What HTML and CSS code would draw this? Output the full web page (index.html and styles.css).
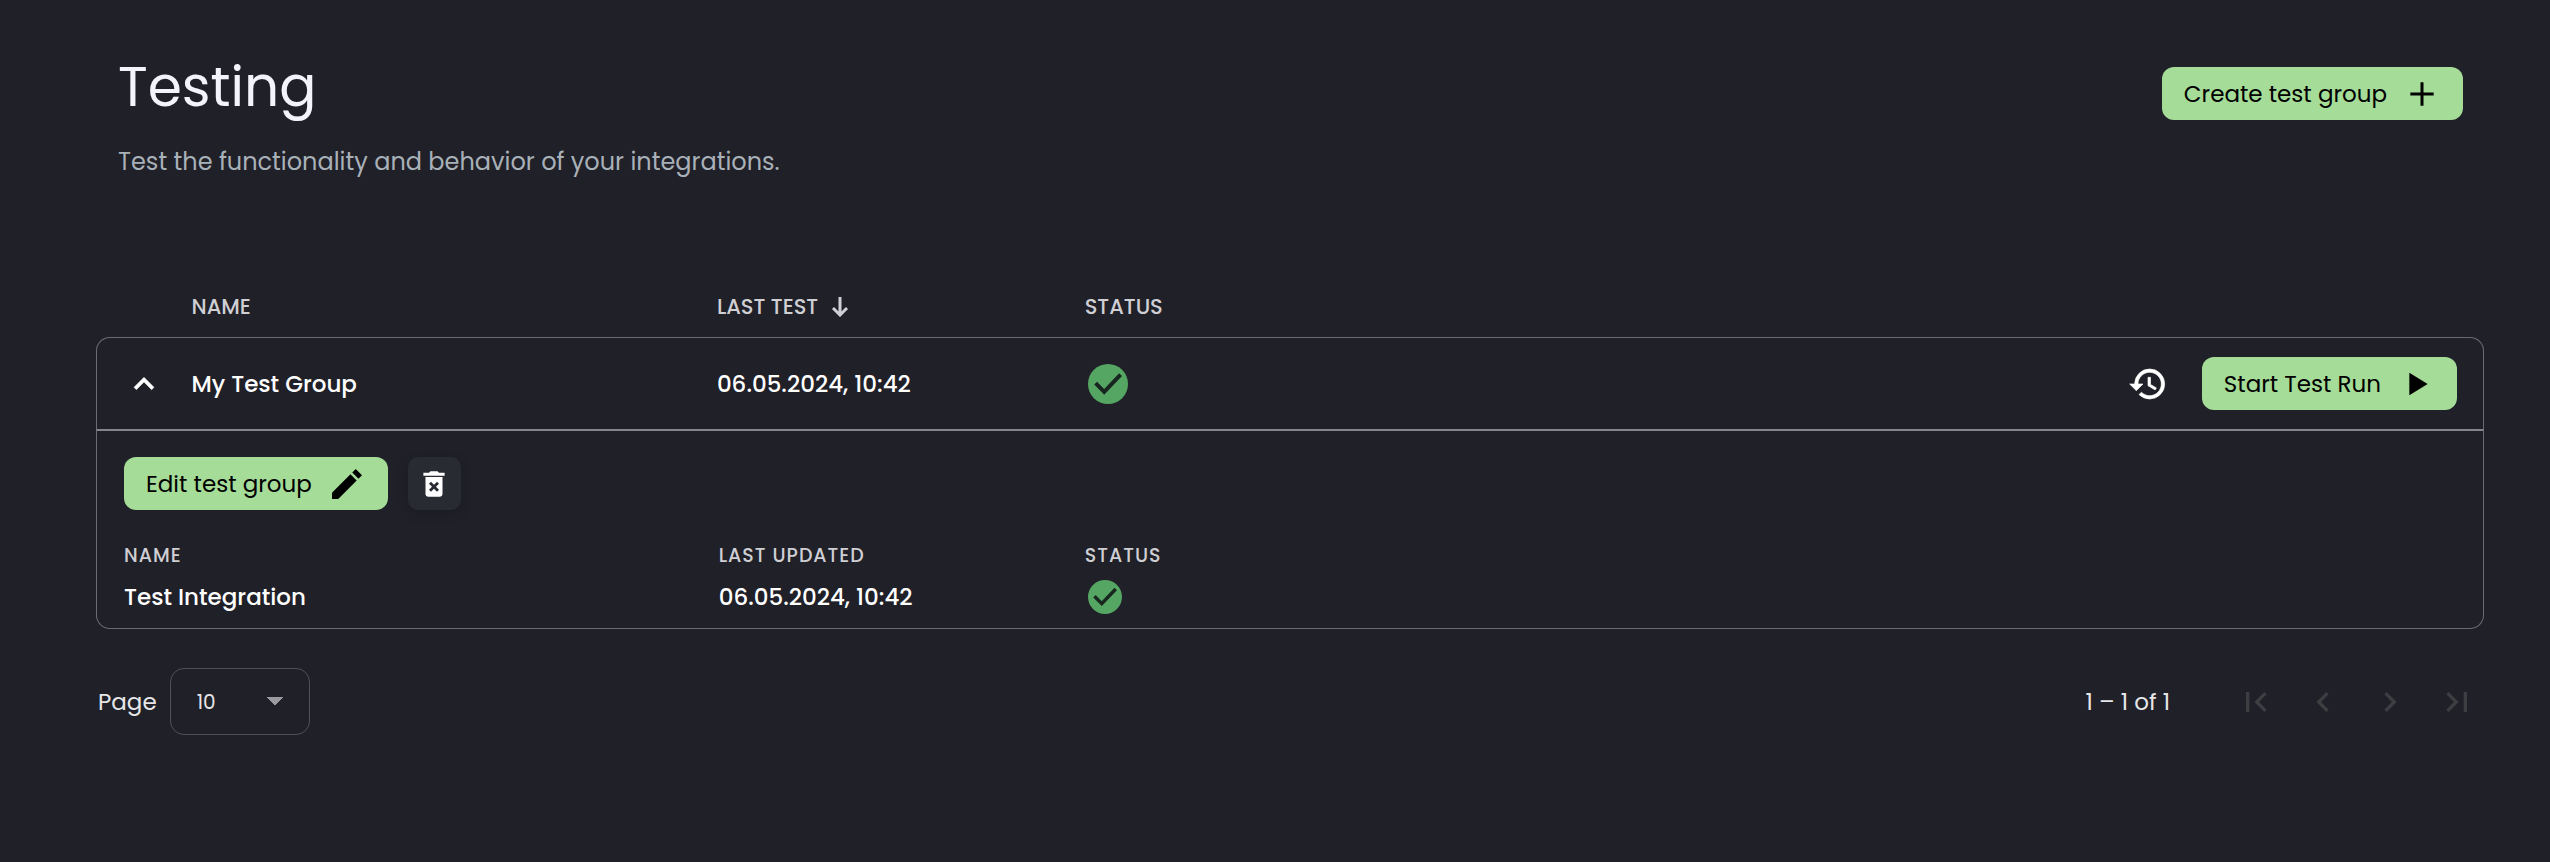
FILE: index.html
```html
<!DOCTYPE html>
<html lang="en">
<head>
<meta charset="utf-8">
<meta name="viewport" content="width=device-width, initial-scale=1">
<title>Testing</title>
<link rel="stylesheet" href="styles.css">
</head>
<body>
<main class="page">
  <header class="page-header">
    <div class="page-heading">
      <h1 class="page-title">Testing</h1>
      <p class="page-description">Test the functionality and behavior of your integrations.</p>
    </div>
    <button class="button" type="button">Create test group
      <svg class="icon" viewBox="0 0 24 24" aria-hidden="true"><path d="M19 12.900h-6.100V19h-1.800v-6.100H5v-1.800h6.100V5h1.800v6.100H19z"/></svg>
    </button>
  </header>

  <table class="groups">
    <colgroup><col class="col-toggle"><col class="col-name"><col class="col-date"><col class="col-status"><col></colgroup>
    <thead>
      <tr>
        <td></td>
        <th scope="col">NAME</th>
        <th scope="col" aria-sort="descending"><button class="sort" type="button">LAST TEST
          <svg class="icon-sort" viewBox="0 0 18 20" aria-hidden="true"><path d="M9 0v18M2 11l7 7 7-7"/></svg></button></th>
        <th scope="col">STATUS</th>
        <td></td>
      </tr>
    </thead>
    <tbody>
      <tr class="group-row">
        <td><button class="toggle" type="button" aria-label="Collapse group" aria-expanded="true">
          <svg class="icon" viewBox="0 0 24 24" aria-hidden="true"><path d="M12 8l-6 6 1.410 1.410L12 10.830l4.590 4.580L18 14z" stroke="currentColor" stroke-width=".3"/></svg></button></td>
        <td>My Test Group</td>
        <td>06.05.2024, 10:42</td>
        <td><svg class="status status-large" viewBox="2 2 20 20" role="img" aria-label="Passed"><circle cx="12" cy="12" r="10"/><path d="M5.800 11.600l4.300 4.300L18.300 7.300"/></svg></td>
        <td><div class="row-actions">
          <button type="button" aria-label="History">
            <svg class="icon" viewBox="0 0 24 24" aria-hidden="true"><path stroke="currentColor" stroke-width=".4" d="M13 3a9 9 0 0 0-9 9H1l3.890 3.890.070.140L9 12H6c0-3.870 3.130-7 7-7s7 3.130 7 7-3.130 7-7 7c-1.930 0-3.680-.790-4.940-2.060l-1.420 1.420A8.950 8.950 0 0 0 13 21a9 9 0 0 0 0-18zm-1 5v5l4.280 2.540.720-1.210-3.500-2.080V8z"/></svg></button>
          <button class="button" type="button">Start Test Run
            <svg class="icon" viewBox="0 0 24 24" aria-hidden="true"><path d="M8 5.200v13.600L19 12z"/></svg></button>
        </div></td>
      </tr>
      <tr>
        <td class="group-detail" colspan="5">
          <div class="detail-actions">
            <button class="button" type="button">Edit test group
              <svg class="icon" viewBox="0 0 24 24" aria-hidden="true"><path d="M3 17.250V21h3.750L17.810 9.940l-3.750-3.750zM21 6.750L17.250 3l-2.120 2.120 3.750 3.750z"/></svg></button>
            <button class="delete" type="button" aria-label="Delete test group">
              <svg class="icon-small" viewBox="0 0 24 24" aria-hidden="true"><path fill-rule="evenodd" d="M6 19c0 1.100.9 2 2 2h8c1.100 0 2-.9 2-2V7H6zm2.460-7.120l1.410-1.410L12 12.590l2.120-2.120 1.410 1.410L13.410 14l2.120 2.120-1.410 1.410L12 15.410l-2.120 2.120-1.410-1.410L10.590 14z"/><path d="M15.500 4l-1-1h-5l-1 1H4.500v2.200h15V4z"/></svg></button>
          </div>
          <table class="integrations">
            <colgroup><col class="col-integration"><col class="col-updated"><col></colgroup>
            <thead><tr><th scope="col">NAME</th><th scope="col">LAST UPDATED</th><th scope="col">STATUS</th></tr></thead>
            <tbody><tr>
              <td>Test Integration</td>
              <td>06.05.2024, 10:42</td>
              <td><svg class="status" viewBox="2 2 20 20" role="img" aria-label="Passed"><circle cx="12" cy="12" r="10"/><path d="M5.800 11.600l4.300 4.300L18.300 7.300"/></svg></td>
            </tr></tbody>
          </table>
        </td>
      </tr>
    </tbody>
  </table>

  <footer class="paginator">
    <div class="page-size">
      <label for="page-size">Page</label>
      <select id="page-size" class="page-select"><option>10</option><option>25</option><option>50</option></select>
    </div>
    <nav class="page-nav" aria-label="Pagination">
      <span class="range">1 – 1 of 1</span>
      <button class="nav-button" type="button" disabled aria-label="First page"><svg class="icon" viewBox="0 0 24 24" aria-hidden="true"><path d="M18.410 16.590L13.820 12l4.590-4.590L17 6l-6 6 6 6zM6 6h2v12H6z"/></svg></button>
      <button class="nav-button" type="button" disabled aria-label="Previous page"><svg class="icon" viewBox="0 0 24 24" aria-hidden="true"><path d="M15.410 7.410L14 6l-6 6 6 6 1.410-1.410L10.830 12z"/></svg></button>
      <button class="nav-button" type="button" disabled aria-label="Next page"><svg class="icon" viewBox="0 0 24 24" aria-hidden="true"><path d="M10 6L8.590 7.410 13.170 12l-4.580 4.590L10 18l6-6z"/></svg></button>
      <button class="nav-button" type="button" disabled aria-label="Last page"><svg class="icon" viewBox="0 0 24 24" aria-hidden="true"><path d="M5.590 7.410L10.180 12l-4.590 4.590L7 18l6-6-6-6zM16 6h2v12h-2z"/></svg></button>
    </nav>
  </footer>
</main>
</body>
</html>
```
FILE: styles.css
```css
* { box-sizing: border-box; }

body {
  margin: 0;
  background: #202028;
  color: #fff;
  font-family: Poppins, Inter, sans-serif;
  font-size: 23px;
  line-height: 36px;
}

button, select { font: inherit; color: inherit; }
button { border: 0; background: none; padding: 0; cursor: pointer; }
svg { display: block; fill: currentColor; flex: none; }

.page { padding: 53px 66px 64px 96px; }

.page-header {
  display: flex;
  justify-content: space-between;
  align-items: flex-start;
  padding: 0 21px 0 22px;
  margin-bottom: 97px;
}
.page-title { margin: 0 0 23px; font-size: 55px; font-weight: 400; line-height: 68px; color: #f3f3fa; }
.page-description { margin: 0; font-size: 24px; color: #a9b1b8; }
.page-header .button { margin-top: 14px; }

.button {
  display: inline-flex;
  align-items: center;
  gap: 15px;
  height: 53px;
  padding: 0 21px 0 22px;
  border-radius: 12px;
  background: #a4dc98;
  color: #000;
  font-weight: 400;
  white-space: nowrap;
}
.icon { width: 40px; height: 40px; }
.icon-small { width: 34px; height: 34px; }

table { width: 100%; border-collapse: separate; border-spacing: 0; table-layout: fixed; }
th, td { padding: 0; text-align: left; font-weight: 500; }

.col-toggle { width: 4%; }
.col-name { width: 22%; }
.col-date { width: 15.4%; }
.col-status { width: 25%; }

.groups > thead th { height: 60px; font-size: 21px; color: #cfcfd4; }
.sort { display: flex; align-items: center; gap: 13px; }
.icon-sort { width: 18px; height: 20px; fill: none; stroke: currentColor; stroke-width: 3; }

.group-row td { height: 92px; border-top: 1px solid #6b6c70; }
.group-row td:first-child { border-left: 1px solid #6b6c70; border-top-left-radius: 14px; }
.group-row td:last-child { border-right: 1px solid #6b6c70; border-top-right-radius: 14px; }
.toggle { margin-left: 27px; display: block; }
.row-actions { display: flex; justify-content: flex-end; align-items: center; gap: 34px; padding-right: 26px; }

.status { width: 34px; height: 34px; margin-left: 3px; fill: #55a563; }
.status-large { width: 40px; height: 40px; }
.status path { fill: none; stroke: #19261f; stroke-width: 2; }

.group-detail {
  padding: 26px 27px 3px;
  border: 1px solid #6b6c70;
  border-top: 2px solid #85868a;
  border-radius: 0 0 14px 14px;
}
.detail-actions { display: flex; gap: 20px; margin-bottom: 33px; }
.delete {
  display: grid;
  place-items: center;
  width: 53px;
  height: 53px;
  border-radius: 10px;
  background: #282b31;
  box-shadow: 0 3px 8px #1c1d22;
}
.col-integration { width: 25.5%; }
.col-updated { width: 15.7%; }
.integrations th { height: 26px; font-size: 19px; line-height: 26px; letter-spacing: 1px; color: #cfcfd4; }
.integrations td { height: 56px; }

.paginator { display: flex; justify-content: space-between; align-items: center; margin-top: 39px; color: #e6e6e8; }
.page-size { display: flex; align-items: center; gap: 13px; padding-left: 2px; }
.page-select {
  width: 140px;
  height: 67px;
  padding: 0 26px;
  border: 1px solid #505155;
  border-radius: 14px;
  appearance: none;
  background:
    linear-gradient(to bottom left, #9b9b9f 50%, transparent 50%) no-repeat right 34px center / 9px 9px,
    linear-gradient(to bottom right, #9b9b9f 50%, transparent 50%) no-repeat right 25px center / 9px 9px;
  font-size: 20px;
}
.page-nav { display: flex; align-items: center; gap: 13px; }
.range { margin-right: 46px; }
.nav-button { display: grid; place-items: center; width: 54px; height: 54px; color: #3d3e42; }
```
